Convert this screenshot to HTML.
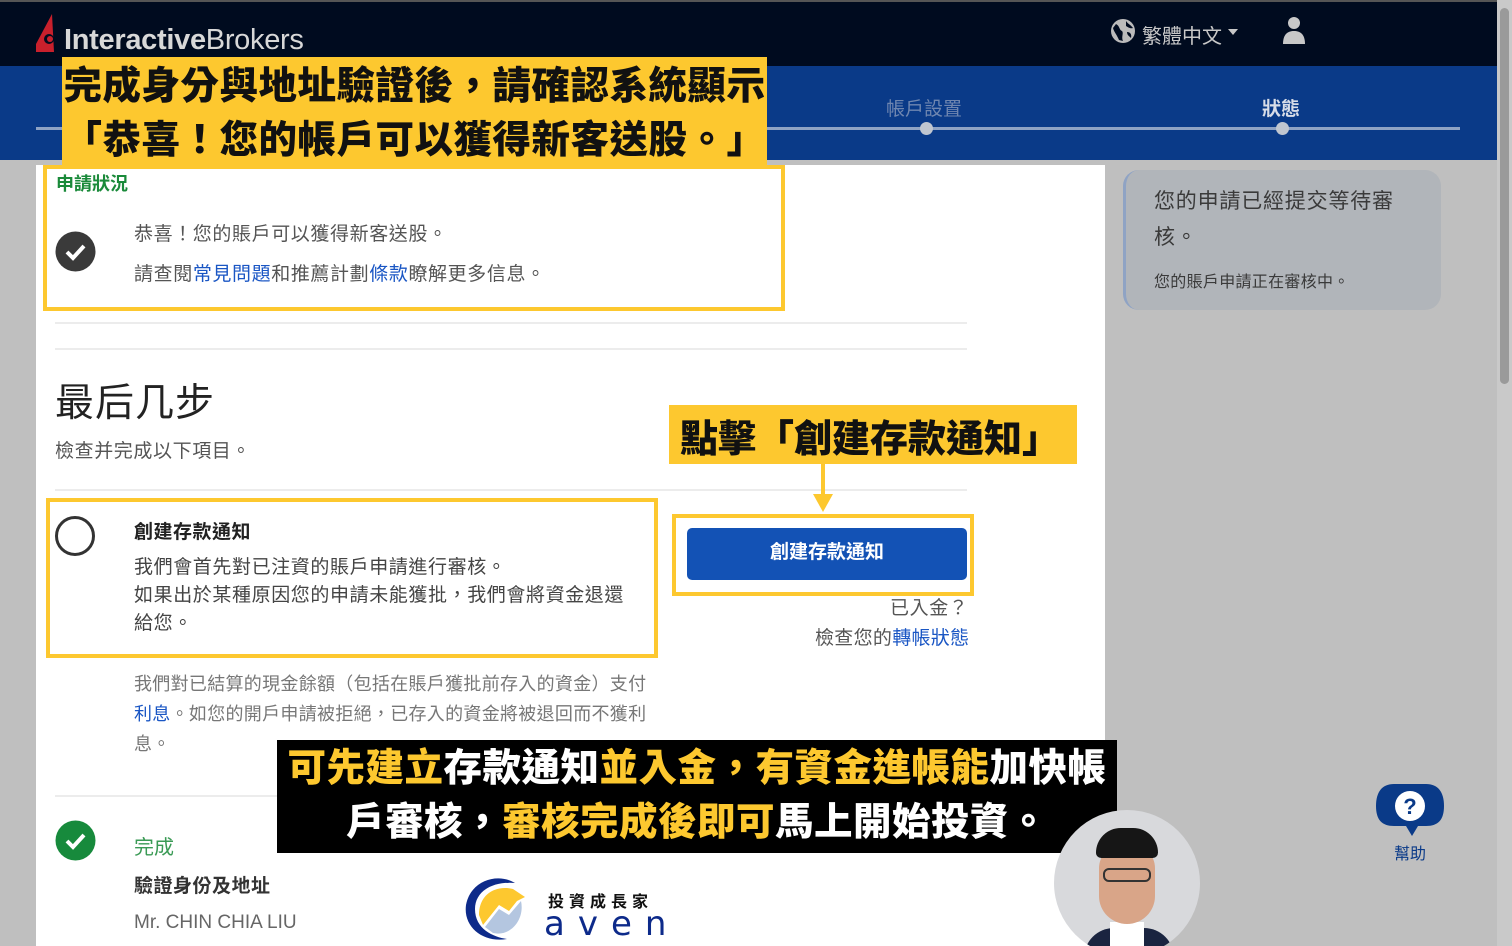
<!DOCTYPE html>
<html><head><meta charset="utf-8"><style>
*{margin:0;padding:0;box-sizing:border-box}
html{width:1512px;height:946px;overflow:hidden}
body{width:1512px;height:946px;overflow:hidden;background:#bfbfbf;font-family:"Liberation Sans","Noto Sans CJK TC",sans-serif;position:relative}
.a{position:absolute}
.cap{font-family:"Liberation Sans","Noto Sans CJK TC",sans-serif;font-weight:900;white-space:nowrap}
.hr{position:absolute;height:2px;background:#ececec;left:55px;width:912px}
.t{color:#555;font-size:19px;white-space:nowrap;letter-spacing:0.6px}
.lnk{color:#1a56c4}
</style></head><body>
<div class="a" style="left:0;top:0;width:1497px;height:66px;background:#000b1f;border-top:2px solid #555"></div>
<svg class="a" style="left:34px;top:14px" width="30" height="40" viewBox="0 0 30 40"><path d="M18 0 L2 30 L2 38 L20 38 Z" fill="#c8202c"/><circle cx="15" cy="25" r="5" fill="#000b1f"/><circle cx="16" cy="25" r="3" fill="#c8202c"/></svg>
<div class="a" style="left:64px;top:24px;color:#d8d8d8;font-size:29px;letter-spacing:-0.3px"><b>Interactive</b>Brokers</div>
<svg class="a" style="left:1110px;top:18px" width="26" height="26" viewBox="0 0 26 26"><circle cx="13" cy="13" r="12" fill="#bbb"/><path d="M6 6 C10 8 9 12 12 13 C14 15 11 19 13 23 L9 22 C7 17 4 14 3 10Z M16 3 C18 6 21 7 23 10 C20 11 18 9 16 8Z M17 14 C20 14 22 16 21 20 C19 18 17 17 17 14Z" fill="#000b1f"/></svg>
<div class="a" style="left:1142px;top:20px;color:#c8c8c8;font-size:20px">繁體中文</div>
<div class="a" style="left:1228px;top:29px;width:0;height:0;border-left:5px solid transparent;border-right:5px solid transparent;border-top:6px solid #c8c8c8"></div>
<svg class="a" style="left:1282px;top:16px" width="24" height="28" viewBox="0 0 24 28"><circle cx="12" cy="7" r="6" fill="#c8c8c8"/><path d="M1 28 C1 18 6 15 12 15 C18 15 23 18 23 28Z" fill="#c8c8c8"/></svg>
<div class="a" style="left:0;top:66px;width:1497px;height:94px;background:#0a3a88"></div>
<div class="a" style="left:36px;top:127px;width:1424px;height:3px;background:#8fa3c4"></div>
<div class="a" style="left:920px;top:122px;width:13px;height:13px;border-radius:50%;background:#c0c6d0"></div>
<div class="a" style="left:1276px;top:122px;width:13px;height:13px;border-radius:50%;background:#c0c6d0"></div>
<div class="a" style="left:886px;top:94px;color:#6f86b0;font-size:19px">帳戶設置</div>
<div class="a" style="left:1262px;top:94px;color:#d8dde8;font-size:19px;font-weight:bold">狀態</div>
<div class="a" style="left:1497px;top:0;width:15px;height:946px;background:#c9c9c9"></div>
<div class="a" style="left:1500px;top:8px;width:9px;height:376px;border-radius:5px;background:#9a9a9a"></div>
<div class="a" style="left:36px;top:165px;width:1069px;height:781px;background:#fff"></div>
<div class="a" style="left:1123px;top:170px;width:318px;height:140px;border-radius:16px;background:#b1b5ba;border-left:3px solid #8fa3c4"></div>
<div class="a" style="left:1154px;top:184px;color:#3a3a3a;font-size:21px;line-height:36px;width:260px;letter-spacing:0.8px">您的申請已經提交等待審核。</div>
<div class="a" style="left:1154px;top:268px;color:#3a3a3a;font-size:16px;letter-spacing:0.3px">您的賬戶申請正在審核中。</div>
<svg class="a" style="left:1374px;top:782px" width="72" height="56" viewBox="0 0 72 56"><path d="M20 2 H52 C64 2 70 10 70 24 C70 38 64 44 52 44 H44 L38 54 L32 44 H20 C8 44 2 38 2 24 C2 10 8 2 20 2Z" fill="#0a3a88"/><circle cx="36" cy="24" r="15" fill="#fff"/><text x="36" y="32" font-size="22" font-weight="bold" text-anchor="middle" fill="#0a3a88" font-family="Liberation Sans">?</text></svg>
<div class="a" style="left:1394px;top:840px;color:#0a3a88;font-size:16px">幫助</div>
<div class="a" style="left:43px;top:165px;width:742px;height:146px;border:4px solid #fdc82f"></div>
<div class="a" style="left:56px;top:170px;color:#1a8a3a;font-size:18px;font-weight:bold">申請狀況</div>
<svg class="a" style="left:55px;top:231px" width="41" height="41" viewBox="0 0 41 41"><circle cx="20.5" cy="20.5" r="20" fill="#3a3a3a"/><path d="M12 21 L18 27 L29 15" stroke="#fff" stroke-width="4" fill="none"/></svg>
<div class="a t" style="left:134px;top:219px">恭喜！您的賬戶可以獲得新客送股。</div>
<div class="a t" style="left:134px;top:259px">請查閱<span class="lnk">常見問題</span>和推薦計劃<span class="lnk">條款</span>瞭解更多信息。</div>
<div class="hr" style="top:322px"></div>
<div class="hr" style="top:348px"></div>
<div class="a" style="left:55px;top:372px;color:#222;font-size:39px;letter-spacing:1px">最后几步</div>
<div class="a t" style="left:55px;top:436px">檢查并完成以下項目。</div>
<div class="hr" style="top:489px"></div>
<div class="a" style="left:46px;top:498px;width:612px;height:160px;border:4px solid #fdc82f"></div>
<div class="a" style="left:55px;top:516px;width:40px;height:40px;border-radius:50%;border:3px solid #333"></div>
<div class="a" style="left:134px;top:517px;color:#222;font-size:19px;font-weight:bold;letter-spacing:0.5px">創建存款通知</div>
<div class="a t" style="left:134px;top:554px;line-height:28px;color:#444">我們會首先對已注資的賬戶申請進行審核。<br>如果出於某種原因您的申請未能獲批，我們會將資金退還<br>給您。</div>
<div class="a t" style="left:134px;top:669px;line-height:30px;color:#777;font-size:18px;letter-spacing:0.3px">我們對已結算的現金餘額（包括在賬戶獲批前存入的資金）支付<br><span class="lnk">利息</span>。如您的開戶申請被拒絕，已存入的資金將被退回而不獲利<br>息。</div>
<div class="hr" style="top:795px"></div>
<svg class="a" style="left:55px;top:820px" width="41" height="41" viewBox="0 0 41 41"><circle cx="20.5" cy="20.5" r="20" fill="#178a3c"/><path d="M12 21 L18 27 L29 15" stroke="#fff" stroke-width="4" fill="none"/></svg>
<div class="a" style="left:134px;top:831px;color:#3a9a55;font-size:20px">完成</div>
<div class="a" style="left:134px;top:871px;color:#333;font-size:19px;font-weight:bold;letter-spacing:0.5px">驗證身份及地址</div>
<div class="a" style="left:134px;top:912px;color:#666;font-size:19px">Mr. CHIN CHIA LIU</div>
<div class="a" style="left:672px;top:514px;width:302px;height:82px;border:4px solid #fdc82f;background:#fff"></div>
<div class="a" style="left:687px;top:528px;width:280px;height:52px;border-radius:5px;background:#1352b5;color:#fff;font-size:19px;text-align:center;line-height:50px;font-weight:bold">創建存款通知</div>
<div class="a t" style="left:890px;top:593px">已入金？</div>
<div class="a t" style="left:815px;top:623px;letter-spacing:0.3px">檢查您的<span class="lnk">轉帳狀態</span></div>
<div class="a" style="left:669px;top:405px;width:408px;height:59px;background:#fdc82f"></div>
<div class="a cap" style="left:680px;top:408px;font-size:38px;color:#111">點擊「創建存款通知」</div>
<div class="a" style="left:821px;top:464px;width:4px;height:32px;background:#fdc82f"></div>
<div class="a" style="left:813px;top:494px;width:0;height:0;border-left:10px solid transparent;border-right:10px solid transparent;border-top:18px solid #fdc82f"></div>
<div class="a" style="left:62px;top:57px;width:705px;height:108px;background:#fdc82f"></div>
<div class="a cap" style="left:62px;top:60px;font-size:38.5px;color:#111;line-height:54px;text-align:center;width:705px;letter-spacing:0.5px">完成身分與地址驗證後，請確認系統顯示<br>「恭喜！您的帳戶可以獲得新客送股。」</div>
<div class="a" style="left:277px;top:740px;width:840px;height:113px;background:#000"></div>
<div class="a cap" style="left:277px;top:742px;width:840px;text-align:center;font-size:38.5px;line-height:54px;color:#fff;letter-spacing:0.5px"><span style="color:#fdc82f">可先建立</span>存款通知<span style="color:#fdc82f">並入金，有資金進帳能</span>加快帳<br>戶審核，<span style="color:#fdc82f">審核完成後即可</span>馬上開始投資。</div>
<svg class="a" style="left:463px;top:875px" width="70" height="68" viewBox="0 0 70 68"><path d="M52 8 C36 -2 8 4 3 30 C0 52 20 68 44 64 C30 62 12 54 12 34 C12 16 30 6 52 8Z" fill="#0d2a8a"/><path d="M16 40 C16 18 34 10 50 14 L62 22 L54 26 L46 36 L36 30 L20 50Z" fill="#fdc82f"/><path d="M22 52 L36 34 L46 40 L58 26 C62 44 48 62 30 58Z" fill="#b4c6e0"/></svg>
<div class="a" style="left:548px;top:888px;font-size:16px;font-weight:bold;letter-spacing:5px;color:#111">投資成長家</div>
<div class="a" style="left:544px;top:904px;font-size:34px;letter-spacing:13px;color:#0d2a8a;font-family:'DejaVu Sans',sans-serif">aven</div>
<div class="a" style="left:1054px;top:810px;width:146px;height:136px;overflow:hidden">
<div class="a" style="left:0;top:0;width:146px;height:146px;border-radius:50%;background:#d8d9dc;overflow:hidden">
<div class="a" style="left:30px;top:118px;width:90px;height:40px;background:#1a2440;border-radius:30px 30px 0 0"></div>
<div class="a" style="left:56px;top:112px;width:34px;height:34px;background:#fff"></div>
<div class="a" style="left:45px;top:34px;width:56px;height:80px;border-radius:26px 26px 30px 30px;background:#d9a588"></div>
<div class="a" style="left:42px;top:18px;width:62px;height:30px;border-radius:28px 28px 6px 6px;background:#161616"></div>
<div class="a" style="left:49px;top:58px;width:48px;height:14px;border:2px solid #333;border-radius:6px"></div>
</div></div>
</body></html>
